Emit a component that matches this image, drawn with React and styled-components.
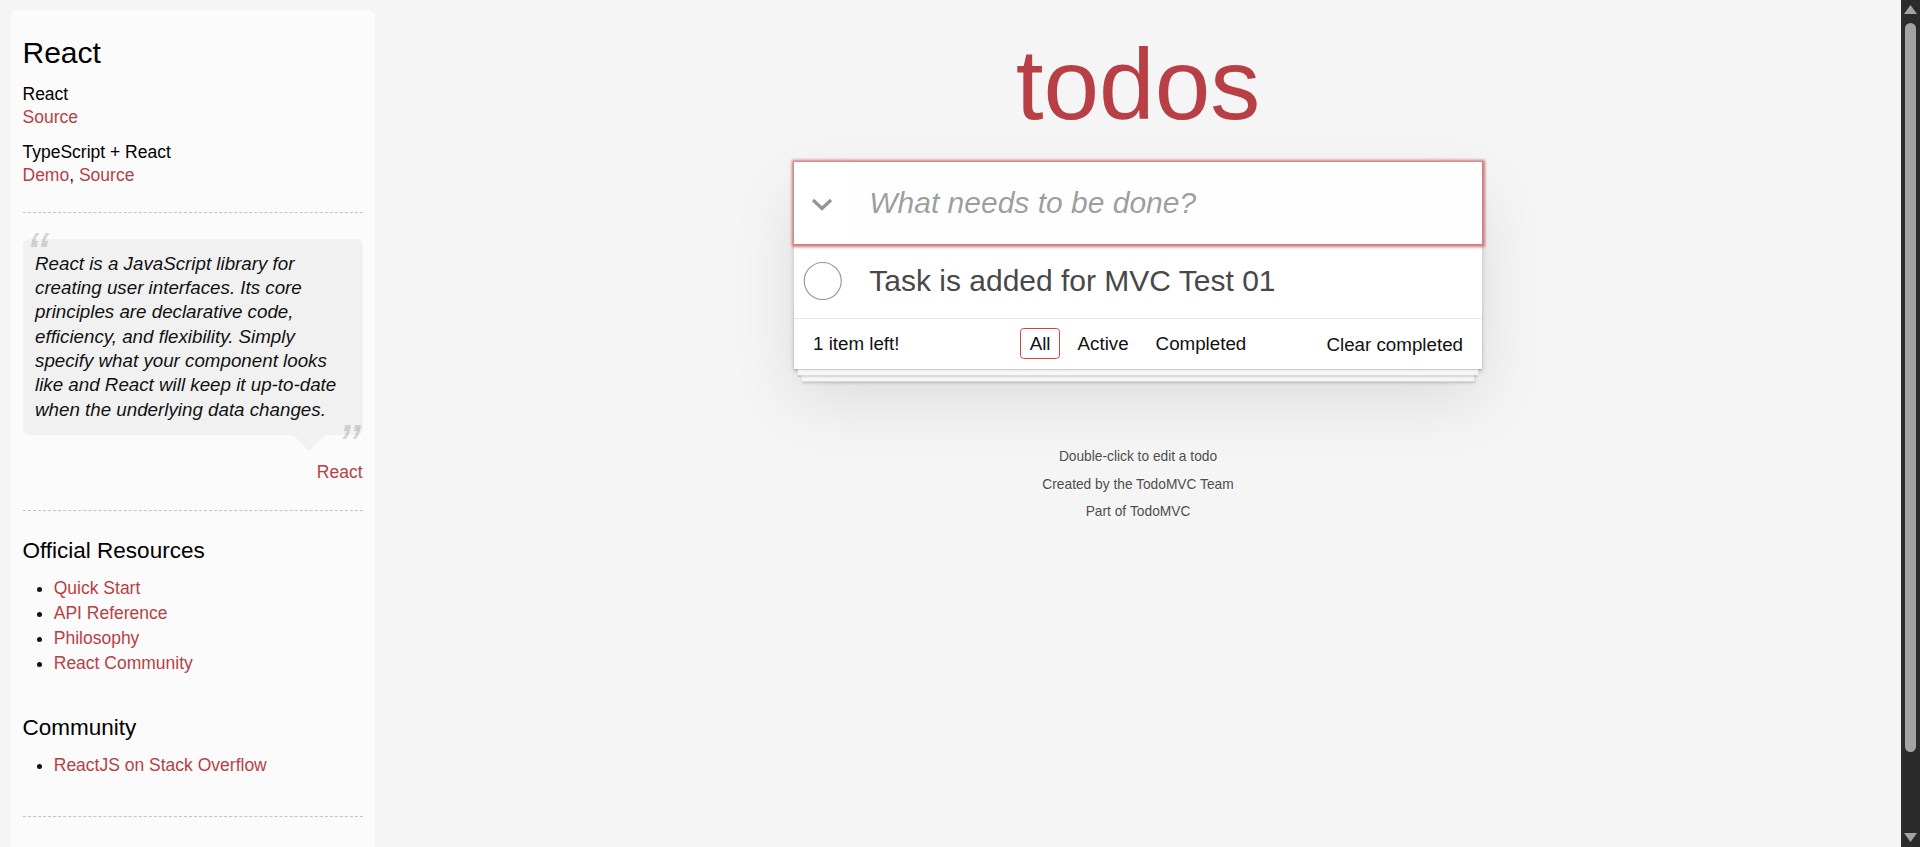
import React from 'react';
import styled, { createGlobalStyle } from 'styled-components';

const GlobalStyle = createGlobalStyle`
  html, body { margin: 0; padding: 0; height: 100%; overflow: hidden; }
  body {
    background: #f5f5f5;
    color: #111111;
    font-family: "Liberation Sans", Arial, Helvetica, sans-serif;
    font-size: 17.5px;
    line-height: 24.5px;
    font-weight: 300;
  }
`;

/* ---------- Window shell with its scroll bar ---------- */
const Shell = styled.div`
  display: flex;
  height: 100vh;
`;

const ScrollArea = styled.div`
  flex: 1;
  min-width: 0;
  overflow-y: auto;
  scrollbar-width: none;
`;

const ScrollBar = styled.div`
  flex: none;
  width: 19px;
  display: flex;
  flex-direction: column;
  background: #2b2b2b;
`;

const ScrollButton = styled.div`
  flex: none;
  height: 19px;
  display: flex;
  align-items: center;
  justify-content: center;
`;

const ScrollTrack = styled.div`
  flex: 1;
  padding: 4px;
`;

const ScrollThumb = styled.div`
  height: ${(p) => p.$length}px;
  border-radius: 6px;
  background: #a3a3a3;
`;

const Arrow = ({ down }) => (
  <svg width="13" height="9" viewBox="0 0 13 9" aria-hidden="true">
    <polygon points={down ? '0,0 13,0 6.5,9' : '6.5,0 13,9 0,9'} fill="#a3a3a3" />
  </svg>
);

const Page = styled.div`
  display: flex;
  align-items: flex-start;
`;

/* ---------- Learn sidebar ---------- */
const Sidebar = styled.aside`
  flex: none;
  width: 340px;
  margin: 10px 0 0 10px;
  padding: 12.5px;
  border-radius: 6.25px;
  background-color: rgba(255, 255, 255, 0.6);
`;

const SideTitle = styled.h3`
  margin: 12.5px 0;
  font-size: 30px;
  font-weight: 500;
  line-height: 1.2;
  color: #000;
`;

const SourceName = styled.h5`
  margin: 12.5px 0 0;
  font-size: 17.5px;
  font-weight: 500;
  line-height: 1.2;
  color: #000;
`;

const SourceLine = styled.div`
  line-height: 24.5px;
`;

const Link = styled.a`
  font-weight: normal;
  text-decoration: none;
  color: #b83f45;
`;

const Divider = styled.hr`
  margin: 25px 0;
  border: 0;
  border-top: 1px dashed #c5c5c5;
  border-bottom: 1px dashed #f7f7f7;
`;

const Bubble = styled.blockquote`
  position: relative;
  margin: 25px 0 0;
  padding: 12.5px;
  background: rgba(0, 0, 0, 0.04);
  border-radius: 6.25px;

  &::after {
    content: '';
    position: absolute;
    top: 100%;
    right: 37.5px;
    border: 16.25px solid transparent;
    border-top-color: rgba(0, 0, 0, 0.04);
  }
`;

const QuoteText = styled.p`
  margin: 0;
  font-size: 18.75px;
  font-weight: 300;
  line-height: 1.3;
  font-style: italic;

  &::before {
    content: '\\201C';
    font-size: 62.5px;
    opacity: 0.15;
    position: absolute;
    top: -25px;
    left: 3.75px;
  }
  &::after {
    content: '\\201D';
    font-size: 62.5px;
    opacity: 0.15;
    position: absolute;
    bottom: -52.5px;
    right: 3.75px;
  }
`;

const Attribution = styled.div`
  margin-top: 25.5px;
  text-align: right;
  line-height: 24.5px;
`;

const SectionTitle = styled.h4`
  margin: 12.5px 0;
  font-size: 22.5px;
  font-weight: 500;
  line-height: 1.2;
  color: #000;
`;

const LinkList = styled.ul`
  padding: 0;
  margin: 0 0 37.5px 31.25px;

  li {
    line-height: 25px;
  }
`;

const Note = styled.em`
  display: block;
  line-height: 24.5px;
`;

/* ---------- Todo app ---------- */
const Main = styled.main`
  flex: 1;
  min-width: 0;
  display: flex;
  flex-direction: column;
  align-items: center;
`;

const Title = styled.h1`
  margin: 33.65px 0 28.85px;
  font-size: 100px;
  line-height: 100px;
  font-weight: 200;
  color: #b83f45;
  text-align: center;
  text-rendering: optimizeLegibility;
`;

const TodoApp = styled.section`
  width: 687.5px;
  background: #fff;
  box-shadow: 0 2.5px 5px 0 rgba(0, 0, 0, 0.2), 0 31.25px 62.5px 0 rgba(0, 0, 0, 0.1);
`;

const HeaderRow = styled.header`
  position: relative;
  z-index: 1;
  display: flex;
  align-items: center;
  height: 81.25px;
  box-shadow: 0 0 2.5px 2.5px #cf7d7d;
  background: #fff;
`;

const ToggleAll = styled.label`
  flex: none;
  width: 56.25px;
  height: 81.25px;
  display: flex;
  align-items: center;
  justify-content: center;
  padding-top: 3px;
  box-sizing: border-box;
`;

const NewTodo = styled.input`
  flex: 1;
  min-width: 0;
  height: 81.25px;
  box-sizing: border-box;
  margin: 0;
  padding: 20px 20px 20px 18.75px;
  border: none;
  outline: 0;
  background: rgba(0, 0, 0, 0.003);
  font-family: inherit;
  font-size: 30px;
  line-height: 42px;
  font-weight: inherit;
  color: inherit;
  caret-color: #000;

  &::placeholder {
    font-style: italic;
    font-weight: 400;
    color: rgba(0, 0, 0, 0.4);
  }
`;

const TodoList = styled.ul`
  margin: 0;
  padding: 0;
  list-style: none;
  border-top: 1px solid #e6e6e6;
`;

const TodoItem = styled.li`
  display: flex;
  align-items: center;
  font-size: 30px;
  border-bottom: 1px solid #ededed;

  &:last-child {
    border-bottom: none;
  }
`;

const ToggleCircle = styled.svg`
  flex: none;
  width: 50px;
  height: 50px;
`;

const TodoLabel = styled.label`
  flex: 1;
  word-break: break-all;
  padding: 18.75px 18.75px 18.75px 25px;
  line-height: 1.2;
  font-weight: 400;
  color: #484848;
`;

const Footer = styled.footer`
  position: relative;
  display: grid;
  grid-template-columns: 1fr auto 1fr;
  align-items: center;
  padding: 12.5px 18.75px;
  height: 25px;
  font-size: 18.75px;
  line-height: 24.5px;
  border-top: 1px solid #e6e6e6;

  &::before {
    content: '';
    position: absolute;
    right: 0;
    bottom: 0;
    left: 0;
    height: 62.5px;
    overflow: hidden;
    pointer-events: none;
    box-shadow:
      0 1.25px 1.25px rgba(0, 0, 0, 0.2),
      0 10px 0 -3.75px #f6f6f6,
      0 11.25px 1.25px -3.75px rgba(0, 0, 0, 0.2),
      0 20px 0 -7.5px #f6f6f6,
      0 21.25px 2.5px -7.5px rgba(0, 0, 0, 0.2);
  }
`;

const Count = styled.span`
  justify-self: start;
  text-align: left;
`;

const Filters = styled.ul`
  display: flex;
  margin: 0;
  padding: 0;
  list-style: none;
`;

const FilterLink = styled.a`
  color: inherit;
  margin: 3.75px;
  padding: 3.75px 8.75px;
  text-decoration: none;
  border: 1px solid ${(p) => (p.$selected ? '#ce4646' : 'transparent')};
  border-radius: 3.75px;
`;

const ClearButton = styled.button`
  justify-self: end;
  margin: 0;
  padding: 0;
  border: 0;
  background: none;
  font-family: inherit;
  font-size: 100%;
  font-weight: inherit;
  color: inherit;
  line-height: 25px;
  cursor: pointer;
`;

const Info = styled.footer`
  margin-top: 81.25px;
  color: #4d4d4d;
  font-size: 13.75px;
  text-shadow: 0 1.25px 0 rgba(255, 255, 255, 0.5);
  text-align: center;

  p {
    margin: 0 0 13.75px;
    line-height: 1;
  }
  a {
    color: inherit;
    text-decoration: none;
    font-weight: 400;
  }
`;

const Chevron = () => (
  <svg width="22" height="13" viewBox="0 0 22 13" aria-hidden="true">
    <polyline
      points="2,2 11,10.5 20,2"
      fill="none"
      stroke="#949494"
      strokeWidth="3.2"
    />
  </svg>
);

const resources = ['Quick Start', 'API Reference', 'Philosophy', 'React Community'];
const filters = ['All', 'Active', 'Completed'];

export default function App() {
  return (
    <Shell>
      <GlobalStyle />
      <ScrollArea>
        <Page>
          <Sidebar>
            <header>
              <SideTitle>React</SideTitle>
              <SourceName>React</SourceName>
              <SourceLine>
                <Link href="#">Source</Link>
              </SourceLine>
              <SourceName>TypeScript + React</SourceName>
              <SourceLine>
                <Link href="#">Demo</Link>, <Link href="#">Source</Link>
              </SourceLine>
            </header>
            <Divider />
            <Bubble>
              <QuoteText>
                React is a JavaScript library for creating user interfaces. Its core
                principles are declarative code, efficiency, and flexibility. Simply
                specify what your component looks like and React will keep it
                up-to-date when the underlying data changes.
              </QuoteText>
            </Bubble>
            <Attribution>
              <Link href="#">React</Link>
            </Attribution>
            <Divider />
            <SectionTitle>Official Resources</SectionTitle>
            <LinkList>
              {resources.map((r) => (
                <li key={r}>
                  <Link href="#">{r}</Link>
                </li>
              ))}
            </LinkList>
            <SectionTitle>Community</SectionTitle>
            <LinkList>
              <li>
                <Link href="#">ReactJS on Stack Overflow</Link>
              </li>
            </LinkList>
            <footer>
              <Divider />
              <Note>
                If you have other helpful links to share, or find any of the links
                above no longer work, please <Link href="#">let us know</Link>.
              </Note>
            </footer>
          </Sidebar>

          <Main>
            <Title>todos</Title>
            <TodoApp>
              <HeaderRow>
                <ToggleAll>
                  <Chevron />
                </ToggleAll>
                <NewTodo placeholder="What needs to be done?" autoFocus />
              </HeaderRow>
              <TodoList>
                <TodoItem>
                  <ToggleCircle viewBox="0 0 40 40" aria-hidden="true">
                    <circle cx="23" cy="20" r="14.8" fill="none" stroke="#949494" strokeWidth="0.9" />
                  </ToggleCircle>
                  <TodoLabel>Task is added for MVC Test 01</TodoLabel>
                </TodoItem>
              </TodoList>
              <Footer>
                <Count>1 item left!</Count>
                <Filters>
                  {filters.map((f) => (
                    <li key={f}>
                      <FilterLink href="#" $selected={f === 'All'}>
                        {f}
                      </FilterLink>
                    </li>
                  ))}
                </Filters>
                <ClearButton>Clear completed</ClearButton>
              </Footer>
            </TodoApp>
            <Info>
              <p>Double-click to edit a todo</p>
              <p>Created by the TodoMVC Team</p>
              <p>
                Part of <a href="#">TodoMVC</a>
              </p>
            </Info>
          </Main>
        </Page>
      </ScrollArea>
      <ScrollBar aria-hidden="true">
        <ScrollButton>
          <Arrow />
        </ScrollButton>
        <ScrollTrack>
          <ScrollThumb $length={729} />
        </ScrollTrack>
        <ScrollButton>
          <Arrow down />
        </ScrollButton>
      </ScrollBar>
    </Shell>
  );
}
